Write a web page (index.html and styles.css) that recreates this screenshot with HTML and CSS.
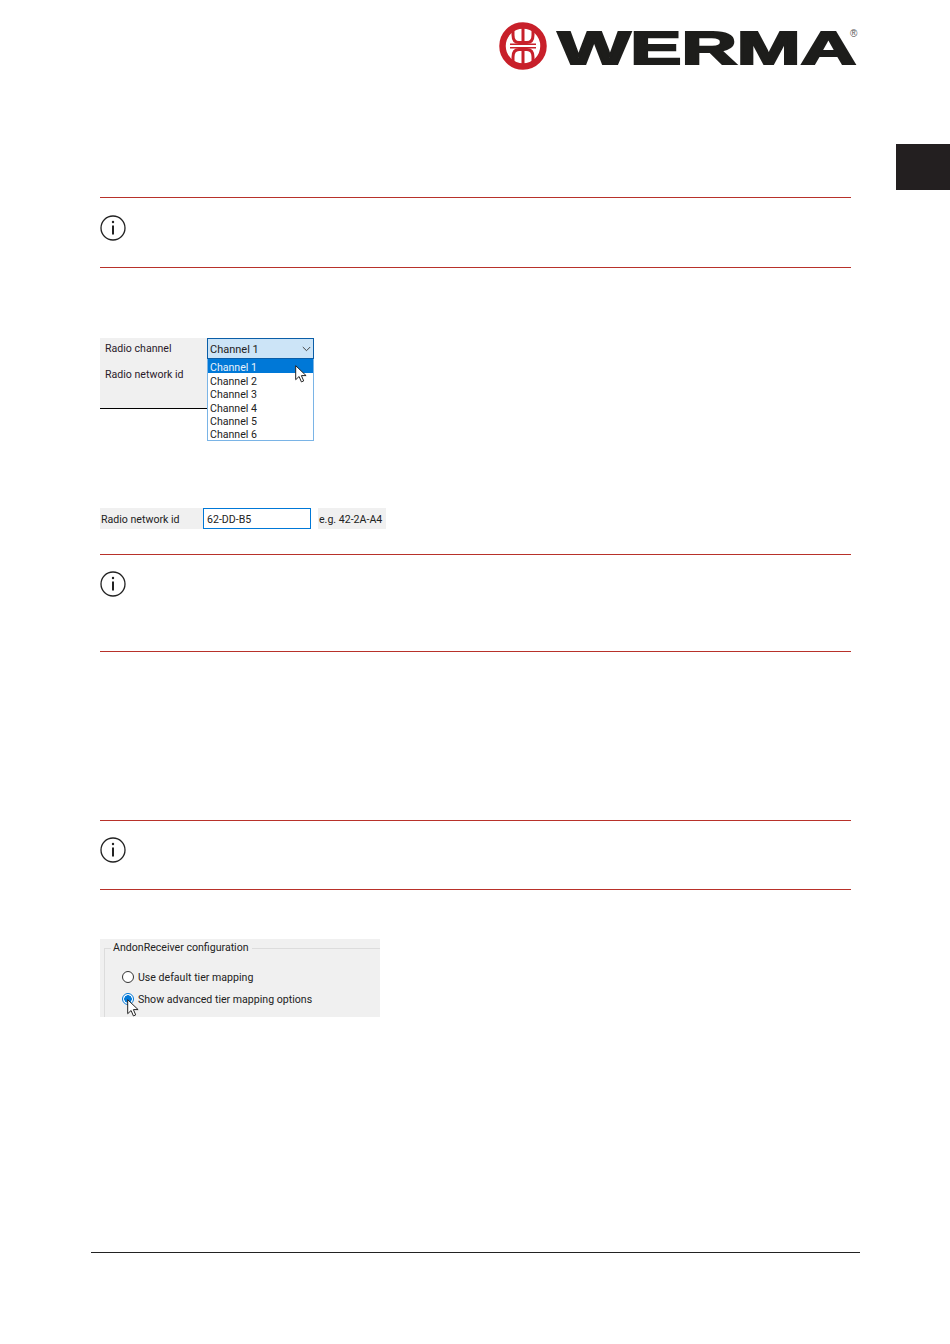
FILE: index.html
```html
<!DOCTYPE html>
<html lang="en">
<head>
<meta charset="utf-8">
<title>WERMA manual page</title>
<link rel="stylesheet" href="styles.css">
</head>
<body>
<div class="page">
  <header class="top">
    <svg class="logo" width="362" height="52" viewBox="0 0 362 52">
      <g fill="none" stroke="#c8202a">
        <circle cx="25" cy="26" r="20.5" stroke-width="6.5"/>
        <path d="M15 7V15Q15 22.500 21 22.500H29Q35 22.500 35 15V7M25 3V22.500M15 45V37Q15 29.500 21 29.500H29Q35 29.500 35 37V45M25 49V29.500" stroke-width="3"/>
        <path d="M12 24.200H38M12 27.800H38" stroke-width="1.400"/>
      </g>
      <text class="logo-word" x="60" y="43.500" textLength="298" lengthAdjust="spacingAndGlyphs">WERMA</text>
      <text class="logo-mark" x="352" y="17">®</text>
    </svg>
  </header>
  <div class="tab"></div>
  <main class="content">
    <section class="note note-short">
      <svg class="info" width="26" height="26" viewBox="0 0 26 26"><circle cx="13" cy="13" r="12" fill="none" stroke="#222" stroke-width="1.3"/><path d="M13 10.500v9" stroke="#222" stroke-width="2"/><circle cx="13" cy="7" r="1.200" fill="#222"/></svg>
    </section>

    <section class="shot-radio">
      <div class="radio-panel">
        <span class="radio-label">Radio channel</span>
        <span class="radio-label">Radio network id</span>
      </div>
      <div class="dropdown">
        <div class="select">
          <span class="select-value">Channel 1</span>
          <svg width="9" height="6" viewBox="0 0 9 6"><path d="M.8 1l3.700 3.700L8.200 1" fill="none" stroke="#444" stroke-width="1"/></svg>
        </div>
        <ul class="options">
          <li class="selected">Channel 1</li>
          <li>Channel 2</li>
          <li>Channel 3</li>
          <li>Channel 4</li>
          <li>Channel 5</li>
          <li>Channel 6</li>
        </ul>
        <svg class="cursor cursor-list" width="12" height="18" viewBox="0 0 12 18"><path d="M.7.7v14l3.400-3.200 2.300 5.400 2.300-1-2.300-5.300h4.700z" fill="#fff" stroke="#222" stroke-width="1"/></svg>
      </div>
    </section>

    <section class="shot-id">
      <span class="id-label">Radio network id</span>
      <span class="id-input">62-DD-B5</span>
      <span class="id-hint">e.g. 42-2A-A4</span>
    </section>

    <section class="note note-tall">
      <svg class="info" width="26" height="26" viewBox="0 0 26 26"><circle cx="13" cy="13" r="12" fill="none" stroke="#222" stroke-width="1.3"/><path d="M13 10.500v9" stroke="#222" stroke-width="2"/><circle cx="13" cy="7" r="1.200" fill="#222"/></svg>
    </section>

    <section class="note note-short note-third">
      <svg class="info" width="26" height="26" viewBox="0 0 26 26"><circle cx="13" cy="13" r="12" fill="none" stroke="#222" stroke-width="1.3"/><path d="M13 10.500v9" stroke="#222" stroke-width="2"/><circle cx="13" cy="7" r="1.200" fill="#222"/></svg>
    </section>

    <section class="shot-config">
      <div class="group">
        <span class="group-title">AndonReceiver configuration</span>
        <div class="option"><span class="radio"></span>Use default tier mapping</div>
        <div class="option"><span class="radio radio-on"></span>Show advanced tier mapping options</div>
      </div>
      <svg class="cursor cursor-radio" width="12" height="18" viewBox="0 0 12 18"><path d="M.7.7v14l3.400-3.200 2.300 5.400 2.300-1-2.300-5.300h4.700z" fill="#fff" stroke="#222" stroke-width="1"/></svg>
    </section>
  </main>
  <footer class="foot"></footer>
</div>
</body>
</html>
```
FILE: styles.css
```css
* { box-sizing: border-box; }
html, body { margin: 0; padding: 0; background: #fff; }
body { font-family: Roboto, "Noto Sans", sans-serif; color: #222; }
.page { position: relative; width: 950px; height: 1344px; overflow: hidden; }

.top { display: flex; justify-content: flex-end; padding: 20px 90px 0 0; height: 72px; }
.logo { display: block; overflow: visible; }
.logo-word { font-family: "Liberation Sans", sans-serif; font-weight: 700; font-size: 46px; fill: #1d1d1b; stroke: #1d1d1b; stroke-width: 2px; }
.logo-mark { font-family: "Liberation Sans", sans-serif; font-size: 10px; fill: #555; }

.tab { position: absolute; top: 144px; right: 0; width: 54px; height: 46px; background: #231f20; }

.content { margin-left: 100px; width: 751px; }
.note { border-top: 1px solid #b8312a; border-bottom: 1px solid #b8312a; }
.note-short { margin-top: 125px; height: 71px; padding-top: 17px; }
.note-tall { margin-top: 25px; height: 98px; padding-top: 16px; }
.note-third { margin-top: 168px; height: 70px; padding-top: 16px; }
.info { display: block; }

.shot-radio { display: flex; margin-top: 70px; width: 214px; align-items: flex-start; }
.radio-panel { width: 107px; height: 71px; background: #f0f0f0; border-bottom: 1px solid #000; display: flex; flex-direction: column; gap: 12px; padding: 4px 0 0 5px; }
.radio-label { font-size: 10.6px; line-height: 14px; color: #2a1a2a; white-space: nowrap; }

.dropdown { position: relative; width: 107px; }
.select { height: 21px; background: #cce4f7; border: 1px solid #0a5ea8; display: flex; align-items: center; justify-content: space-between; padding: 0 2px 0 2px; font-size: 11px; }
.select-value { line-height: 19px; padding-top: 1px; }
.options { list-style: none; margin: 0; padding: 0; background: #fff; border: 1px solid #7ab4e6; border-top: 0; height: 82px; }
.options li { height: 13.3px; line-height: 17px; padding-left: 2px; font-size: 10.6px; white-space: nowrap; }
.options .selected { height: 14px; background: #0078d7; color: #e8f2fb; }
.cursor { position: absolute; }
.cursor-list { left: 88px; top: 27px; }

.shot-id { display: flex; align-items: stretch; margin-top: 67px; width: 286px; height: 21px; }
.id-label { flex: none; width: 103px; padding-left: 1px; font-size: 10.6px; line-height: 23px; white-space: nowrap; background: #f0f0f0; }
.id-input { flex: none; width: 108px; height: 21px; background: #fff; border: 1px solid #0078d7; padding-left: 3px; font-size: 10.6px; line-height: 21px; }
.id-hint { flex: none; width: 68px; margin-left: 7px; padding-left: 1px; font-size: 10.6px; line-height: 23px; white-space: nowrap; background: #f0f0f0; }

.shot-config { position: relative; margin-top: 49px; width: 280px; height: 78px; background: #f0f0f0; overflow: hidden; padding: 9px 0 0 4px; }
.group { position: relative; height: 90px; border: 1px solid #dcdcdc; border-right: 0; padding: 17px 0 0 17px; }
.group-title { position: absolute; left: 6px; top: -9px; background: #f0f0f0; padding: 0 3px 0 2px; font-size: 10.6px; line-height: 15px; white-space: nowrap; }
.option { display: flex; align-items: center; gap: 4px; height: 22px; font-size: 10.6px; white-space: nowrap; }
.radio { width: 12px; height: 12px; border-radius: 50%; border: 1px solid #333; background: #fff; flex: none; }
.radio-on { border-color: #0078d7; background: radial-gradient(circle, #0078d7 0 3.5px, #fff 4px); }
.cursor-radio { left: 27px; top: 60px; }

.foot { margin: 235px 0 0 91px; width: 769px; border-top: 1px solid #222; }
```
